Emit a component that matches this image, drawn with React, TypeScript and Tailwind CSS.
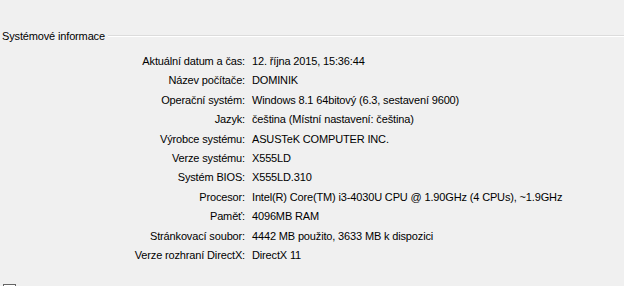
import React from 'react';

const rows: [string, string][] = [
  ['Aktuální datum a čas:', '12. října 2015, 15:36:44'],
  ['Název počítače:', 'DOMINIK'],
  ['Operační systém:', 'Windows 8.1 64bitový (6.3, sestavení 9600)'],
  ['Jazyk:', 'čeština (Místní nastavení: čeština)'],
  ['Výrobce systému:', 'ASUSTeK COMPUTER INC.'],
  ['Verze systému:', 'X555LD'],
  ['Systém BIOS:', 'X555LD.310'],
  ['Procesor:', 'Intel(R) Core(TM) i3-4030U CPU @ 1.90GHz (4 CPUs), ~1.9GHz'],
  ['Paměť:', '4096MB RAM'],
  ['Stránkovací soubor:', '4442 MB použito, 3633 MB k dispozici'],
  ['Verze rozhraní DirectX:', 'DirectX 11'],
];

const App: React.FC = () => {
  return (
    <div
      className="w-[624px] h-[286px] overflow-hidden bg-[#f0f0f0] text-black text-[11px] leading-[16px] tracking-[-0.15px]"
      style={{ fontFamily: '"Liberation Sans", Arial, sans-serif' }}
    >
      {/* group box header */}
      <div className="flex h-[16px] items-center mt-[28px] pl-[2px]">
        <span className="pr-[3px] whitespace-nowrap">Systémové informace</span>
        <div className="flex-1 border-t border-[#dcdcdc] border-b border-b-white" />
      </div>

      {/* label / value rows */}
      <div className="mt-[7.3px] flex flex-col">
        {rows.map(([label, value]) => (
          <div key={label} className="flex h-[19.4px] items-center">
            <span className="w-[245px] text-right whitespace-nowrap">{label}</span>
            <span className="pl-[7px] whitespace-nowrap">{value}</span>
          </div>
        ))}
      </div>

      {/* checkbox peeking in at the bottom */}
      <div className="mt-[19.3px] ml-[3px] w-[13px] h-[13px] border border-[#646464] bg-white" />
    </div>
  );
};

export default App;
